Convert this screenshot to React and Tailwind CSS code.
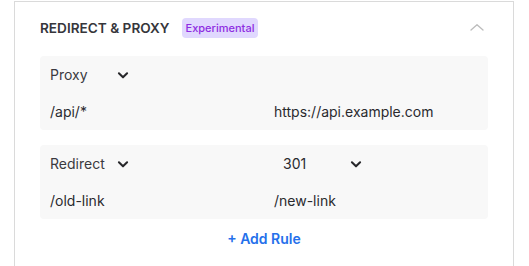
import React from "react";

function ChevronDown({ className = "" }) {
  return (
    <svg width="14" height="14" viewBox="0 0 24 24" fill="none" stroke="currentColor" strokeWidth="3.5" strokeLinecap="round" strokeLinejoin="round" className={className}>
      <path d="M5 9l7 7 7-7" />
    </svg>
  );
}

function ChevronUp({ className = "" }) {
  return (
    <svg width="16" height="16" viewBox="0 0 24 24" fill="none" stroke="currentColor" strokeWidth="2" strokeLinecap="round" strokeLinejoin="round" className={className}>
      <path d="M3 15l9-8 9 8" />
    </svg>
  );
}

function Select({ label, className = "" }) {
  return (
    <div className={"flex items-center justify-between w-[80px] " + className}>
      <span>{label}</span>
      <ChevronDown className="text-[#27272a]" />
    </div>
  );
}

export default function App() {
  return (
    <div className="w-[529px] h-[266px] bg-white overflow-hidden" style={{ fontFamily: "Inter, 'Liberation Sans', sans-serif" }}>
      <div className="ml-[14px] mt-[1px] w-[500px] h-[280px] border-t border-l border-r border-[#dadada] px-[25px] text-[14px] text-[#2a2a2e]">
        <div className="flex items-center justify-between h-[54px] pb-[2px]">
          <div className="flex items-center gap-[12px]">
            <span className="font-semibold text-[#36363b] text-[13.6px]">REDIRECT &amp; PROXY</span>
            <span className="bg-[#e0d8fe] text-[#8e2de2] text-[11px] font-medium rounded-[4px] px-[4px] h-[20px] leading-[20px]">Experimental</span>
          </div>
          <ChevronUp className="text-[#bdbdbd] mr-[3px]" />
        </div>

        <div className="flex flex-col gap-[15px]">
          <div className="rounded-[4px] bg-[#f8f8f8]">
            <div className="grid grid-cols-2 h-[37px] items-center">
              <div className="pl-[10px]"><Select label="Proxy" className="text-[#3a3a3f]" /></div>
              <div />
            </div>
            <div className="grid grid-cols-2 h-[37px] items-center">
              <div className="pl-[10px]">/api/*</div>
              <div className="pl-[10px]">https://api.example.com</div>
            </div>
          </div>

          <div className="rounded-[4px] bg-[#f8f8f8]">
            <div className="grid grid-cols-2 h-[37px] items-center">
              <div className="pl-[10px]"><Select label="Redirect" className="text-[#3a3a3f]" /></div>
              <div className="pl-[19px]"><Select label="301" /></div>
            </div>
            <div className="grid grid-cols-2 h-[37px] items-center">
              <div className="pl-[10px]">/old-link</div>
              <div className="pl-[10px]">/new-link</div>
            </div>
          </div>
        </div>

        <div className="flex justify-center mt-[10px]">
          <button className="text-[#2570eb] font-semibold text-[14px] leading-[20px]">+ Add Rule</button>
        </div>
      </div>
    </div>
  );
}
